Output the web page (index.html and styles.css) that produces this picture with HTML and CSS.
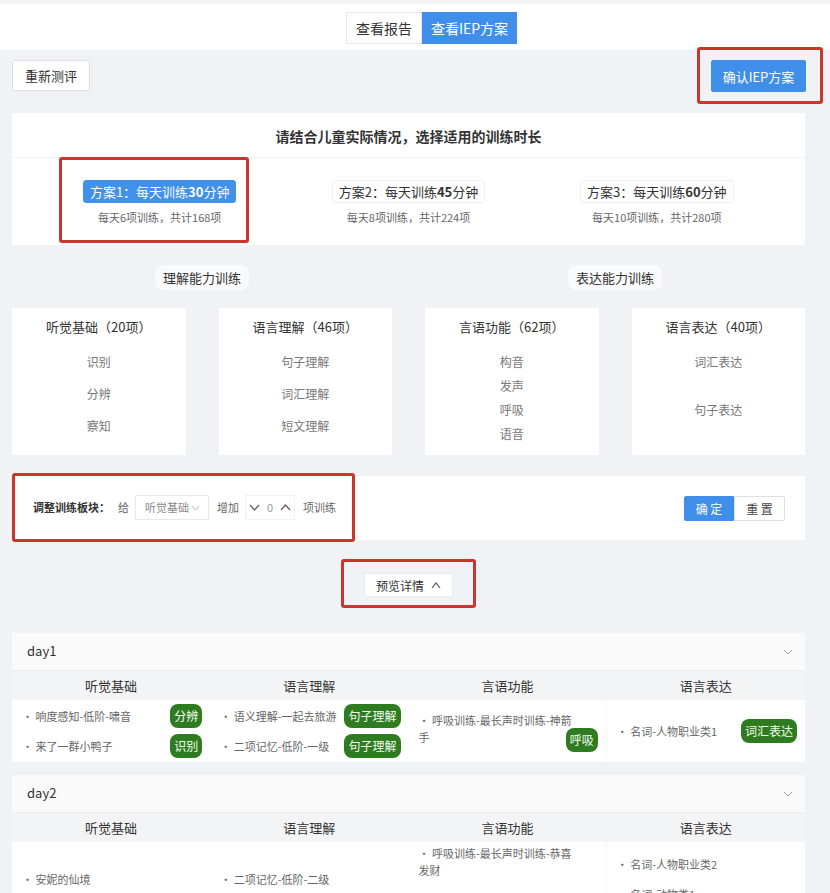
FILE: index.html
```html
<!DOCTYPE html>
<html lang="zh-CN">
<head>
    <meta charset="UTF-8">
    <meta name="viewport" content="width=device-width, initial-scale=1.0">
    <title>IEP方案</title>
    <link rel="stylesheet" href="styles.css">
</head>
<body>
    <header class="topbar">
        <nav class="tabs">
            <a class="tab">查看报告</a>
            <a class="tab active">查看IEP方案</a>
        </nav>
    </header>

    <main class="page">
        <div class="toolbar">
            <button class="btn">重新测评</button>
            <div class="mark mark-confirm">
                <button class="btn btn-primary btn-confirm">确认IEP方案</button>
            </div>
        </div>

        <!-- 方案选择 -->
        <section class="card plans-card">
            <h3 class="plans-title">请结合儿童实际情况，选择适用的训练时长</h3>
            <div class="plans">
                <div class="plan mark selected">
                    <div class="plan-btn active">方案1：每天训练<b>30</b>分钟</div>
                    <p class="plan-desc">每天6项训练，共计168项</p>
                </div>
                <div class="plan">
                    <div class="plan-btn">方案2：每天训练<b>45</b>分钟</div>
                    <p class="plan-desc">每天8项训练，共计224项</p>
                </div>
                <div class="plan">
                    <div class="plan-btn">方案3：每天训练<b>60</b>分钟</div>
                    <p class="plan-desc">每天10项训练，共计280项</p>
                </div>
            </div>
        </section>

        <div class="sections">
            <span class="section-label">理解能力训练</span>
            <span class="section-label">表达能力训练</span>
        </div>

        <div class="abilities">
            <div class="card ability">
                <h4>听觉基础（20项）</h4>
                <ul>
                    <li>识别</li>
                    <li>分辨</li>
                    <li>察知</li>
                </ul>
            </div>
            <div class="card ability">
                <h4>语言理解（46项）</h4>
                <ul>
                    <li>句子理解</li>
                    <li>词汇理解</li>
                    <li>短文理解</li>
                </ul>
            </div>
            <div class="card ability">
                <h4>言语功能（62项）</h4>
                <ul>
                    <li>构音</li>
                    <li>发声</li>
                    <li>呼吸</li>
                    <li>语音</li>
                </ul>
            </div>
            <div class="card ability">
                <h4>语言表达（40项）</h4>
                <ul>
                    <li>词汇表达</li>
                    <li>句子表达</li>
                </ul>
            </div>
        </div>

        <!-- 调整训练板块 -->
        <section class="card adjust">
            <div class="mark mark-adjust">
                <span class="adjust-label">调整训练板块：</span>
                <span class="adjust-text">给</span>
                <div class="select">
                    听觉基础
                    <svg width="9" height="6" viewBox="0 0 9 6"><polyline points="1,1 4.5,5 8,1" fill="none" stroke="#b5b5b5" stroke-width="1"/></svg>
                </div>
                <span class="adjust-text">增加</span>
                <div class="number">
                    <svg width="11" height="7" viewBox="0 0 11 7"><polyline points="1,1 5.5,6 10,1" fill="none" stroke="#666" stroke-width="1.4"/></svg>
                    <span>0</span>
                    <svg width="11" height="7" viewBox="0 0 11 7"><polyline points="1,6 5.5,1 10,6" fill="none" stroke="#666" stroke-width="1.4"/></svg>
                </div>
                <span class="adjust-text">项训练</span>
            </div>
            <div class="btn-group">
                <button class="btn btn-sm btn-primary">确 定</button>
                <button class="btn btn-sm">重 置</button>
            </div>
        </section>

        <div class="preview-wrap">
            <div class="mark mark-preview">
                <button class="btn btn-preview">
                    预览详情
                    <svg width="10" height="7" viewBox="0 0 10 7"><polyline points="1,6 5,1 9,6" fill="none" stroke="#555" stroke-width="1.2"/></svg>
                </button>
            </div>
        </div>

        <!-- 每日训练 -->
        <section class="day">
            <div class="day-head">
                <span>day1</span>
                <svg width="10" height="6" viewBox="0 0 10 6"><polyline points="1,1 5,5 9,1" fill="none" stroke="#9a9a9a" stroke-width="1"/></svg>
            </div>
            <div class="day-cols">
                <div>听觉基础</div>
                <div>语言理解</div>
                <div>言语功能</div>
                <div>语言表达</div>
            </div>
            <div class="day-body">
                <div class="cell">
                    <div class="item"><span class="item-text">• 响度感知-低阶-啸音</span><span class="tag">分辨</span></div>
                    <div class="item"><span class="item-text">• 来了一群小鸭子</span><span class="tag">识别</span></div>
                </div>
                <div class="cell">
                    <div class="item"><span class="item-text">• 语义理解-一起去旅游</span><span class="tag">句子理解</span></div>
                    <div class="item"><span class="item-text">• 二项记忆-低阶-一级</span><span class="tag">句子理解</span></div>
                </div>
                <div class="cell cell-split">
                    <div class="item wrap"><span class="item-text">• 呼吸训练-最长声时训练-神箭手</span><span class="tag">呼吸</span></div>
                </div>
                <div class="cell">
                    <div class="item"><span class="item-text">• 名词-人物职业类1</span><span class="tag">词汇表达</span></div>
                </div>
            </div>
        </section>

        <section class="day">
            <div class="day-head">
                <span>day2</span>
                <svg width="10" height="6" viewBox="0 0 10 6"><polyline points="1,1 5,5 9,1" fill="none" stroke="#9a9a9a" stroke-width="1"/></svg>
            </div>
            <div class="day-cols">
                <div>听觉基础</div>
                <div>语言理解</div>
                <div>言语功能</div>
                <div>语言表达</div>
            </div>
            <div class="day-body">
                <div class="cell">
                    <div class="item"><span class="item-text">• 安妮的仙境</span></div>
                </div>
                <div class="cell">
                    <div class="item"><span class="item-text">• 二项记忆-低阶-二级</span></div>
                </div>
                <div class="cell cell-split">
                    <div class="item wrap"><span class="item-text">• 呼吸训练-最长声时训练-恭喜发财</span></div>
                    <div class="item"><span class="item-text">• 发声训练-低阶</span></div>
                </div>
                <div class="cell">
                    <div class="item"><span class="item-text">• 名词-人物职业类2</span></div>
                    <div class="item"><span class="item-text">• 名词-动物类1</span></div>
                </div>
            </div>
        </section>
    </main>
</body>
</html>
```

FILE: styles.css
```css
* {
    margin: 0;
    padding: 0;
    box-sizing: border-box;
}

body {
    background: #f0f2f5;
    font-family: "Noto Sans CJK SC", "Noto Sans", sans-serif;
    font-size: 12px;
    line-height: 1.4;
    color: #333;
}

/* 顶部切换 */
.topbar {
    background: #fff;
    border-top: 4px solid #f3f4f6;
    height: 50px;
    padding-top: 8px;
}

.tabs {
    display: flex;
    justify-content: center;
    padding-left: 33px;
}

.tab {
    display: block;
    height: 32px;
    line-height: 30px;
    padding: 0 9px;
    border: 1px solid #e4e7ed;
    font-size: 14px;
    color: #333;
    cursor: pointer;
}

.tab.active {
    background: #3f8fea;
    border-color: #3f8fea;
    color: #fff;
    padding: 0 8px;
}

.page {
    padding: 0 25px 40px 12px;
}

/* 按钮 */
.btn {
    height: 31px;
    padding: 0 12px;
    background: #fff;
    border: 1px solid #dcdfe6;
    border-radius: 2px;
    font-family: inherit;
    font-size: 13px;
    color: #333;
    cursor: pointer;
}

.btn-primary {
    background: #3f8fea;
    border-color: #3f8fea;
    color: #fff;
}

.mark {
    border: 3px solid #c9372c;
    border-radius: 3px;
}

.toolbar {
    display: flex;
    justify-content: space-between;
    align-items: center;
    margin: -3px -18px 0 0;
}

.mark-confirm {
    padding: 10px 14px 9px 11px;
}

.btn-confirm {
    height: 32px;
    width: 95px;
    padding: 0;
}

.card {
    background: #fff;
}

/* 方案 */
.plans-card {
    margin-top: 9px;
}

.plans-title {
    font-size: 14px;
    font-weight: bold;
    text-align: center;
    line-height: 20px;
    padding: 13px 0 11px;
    border-bottom: 1px solid #f2f2f2;
}

.plans {
    display: grid;
    grid-template-columns: repeat(3, 1fr);
    justify-items: center;
    padding: 0 24px 2px;
    margin-top: -1px;
}

.plan {
    border: 3px solid transparent;
    padding: 20px 10px 15px;
    text-align: center;
}

.plan.selected {
    border-color: #c9372c;
    padding-left: 21px;
    margin-right: 12px;
}

.plan-btn {
    height: 23px;
    line-height: 21px;
    padding: 0 6px;
    font-size: 13px;
    border: 1px solid #f0f0f0;
    border-radius: 3px;
    color: #333;
}

.plan-btn b {
    font-weight: 600;
}

.plan-btn.active {
    background: #4190ea;
    border-color: #4190ea;
    color: #fff;
}

.plan-desc {
    font-size: 11px;
    color: #666;
    line-height: 16px;
    margin-top: 6px;
}

/* 能力板块 */
.sections {
    display: grid;
    grid-template-columns: 1fr 1fr;
    gap: 33px;
    justify-items: center;
    margin-top: 20px;
}

.section-label {
    line-height: 25px;
    padding: 0 8px;
    background: rgba(255, 255, 255, 0.6);
    border-radius: 8px;
    font-size: 13px;
}

.abilities {
    display: grid;
    grid-template-columns: repeat(4, 1fr);
    gap: 33px;
    margin-top: 18px;
}

.ability {
    height: 147px;
    padding-top: 10px;
    text-align: center;
}

.ability h4 {
    font-size: 13px;
    font-weight: normal;
    line-height: 18px;
}

.ability ul {
    list-style: none;
    height: 96px;
    margin-top: 19px;
    display: flex;
    flex-direction: column;
}

.ability li {
    flex: 1;
    font-size: 12px;
    line-height: 14px;
    color: #777;
}

/* 调整训练板块 */
.adjust {
    display: flex;
    align-items: center;
    justify-content: space-between;
    height: 64px;
    margin-top: 21px;
    padding-right: 20px;
}

.mark-adjust {
    align-self: stretch;
    margin: -3px 0 -2px;
    width: 343px;
    padding-left: 18px;
    display: flex;
    align-items: center;
}

.adjust-label {
    font-size: 11px;
    font-weight: bold;
}

.adjust-text {
    font-size: 11px;
    color: #666;
    margin-left: 8px;
}

.select {
    display: flex;
    align-items: center;
    gap: 2px;
    width: 74px;
    height: 25px;
    margin-left: 6px;
    padding-left: 9px;
    border: 1px solid #e8e8e8;
    border-radius: 2px;
    font-size: 11px;
    color: #888;
}

.number {
    display: flex;
    align-items: center;
    justify-content: space-around;
    width: 50px;
    height: 25px;
    margin-left: 6px;
    border: 1px solid #f2f2f2;
    font-size: 11px;
    color: #999;
}

.btn-group {
    display: flex;
}

.btn-sm {
    height: 25px;
    width: 50px;
    padding: 0;
    font-size: 12px;
    border-radius: 2px 0 0 2px;
}

.btn-sm + .btn-sm {
    width: 51px;
    border-radius: 0 2px 2px 0;
    color: #444;
}

/* 预览详情 */
.preview-wrap {
    display: flex;
    justify-content: center;
    margin-top: 19px;
}

.mark-preview {
    padding: 11px 20px 8px;
}

.btn-preview {
    display: flex;
    align-items: center;
    justify-content: center;
    gap: 7px;
    height: 24px;
    width: 89px;
    padding: 0;
    font-size: 12px;
    border-color: #ebebeb;
}

/* 每日训练 */
.day {
    margin-top: 25px;
    background: #fff;
}

.day + .day {
    margin-top: 13px;
}

.day-head {
    display: flex;
    align-items: center;
    justify-content: space-between;
    height: 38px;
    padding: 0 12px 0 15px;
    background: #fafafa;
    border-bottom: 1px solid #ececec;
    font-size: 13px;
}

.day-cols {
    display: grid;
    grid-template-columns: repeat(4, 1fr);
    height: 29px;
    line-height: 29px;
    background: #f3f4f6;
    text-align: center;
    font-size: 13px;
}

.day-body {
    display: grid;
    grid-template-columns: repeat(4, 1fr);
    padding: 1px 0;
}

.cell {
    display: flex;
    flex-direction: column;
    justify-content: center;
    padding: 0 8px 0 10px;
}

.cell-split {
    border-right: 1px solid #f4f4f4;
}

.item {
    display: flex;
    align-items: center;
    justify-content: space-between;
    min-height: 30px;
    font-size: 11px;
    color: #666;
}

.item-text {
    line-height: 17px;
    word-break: break-all;
}

/* 长文本换行，标签落在右下角 */
.item.wrap {
    display: grid;
    align-items: stretch;
    min-height: 40px;
}

.item.wrap > * {
    grid-area: 1 / 1;
}

.item.wrap .item-text {
    padding: 2px 24px 6px 0;
}

.item.wrap .tag {
    justify-self: end;
    align-self: end;
}

.tag {
    flex-shrink: 0;
    height: 24px;
    line-height: 24px;
    margin-left: 4px;
    padding: 0 4px;
    background: #2f7b20;
    color: #f2fff0;
    border-radius: 8px;
    font-size: 12px;
}
```
